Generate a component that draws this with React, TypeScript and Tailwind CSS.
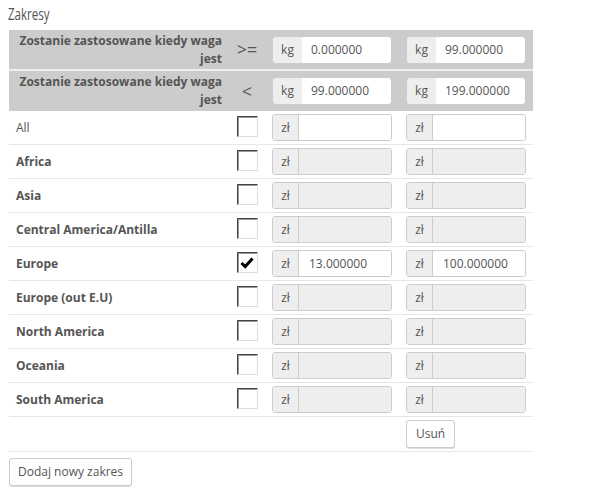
import React from "react";

const rows: { name: string; bold: boolean; enabled: boolean; checked: boolean; v1: string; v2: string }[] = [
  { name: "All", bold: false, enabled: true, checked: false, v1: "", v2: "" },
  { name: "Africa", bold: true, enabled: false, checked: false, v1: "", v2: "" },
  { name: "Asia", bold: true, enabled: false, checked: false, v1: "", v2: "" },
  { name: "Central America/Antilla", bold: true, enabled: false, checked: false, v1: "", v2: "" },
  { name: "Europe", bold: true, enabled: true, checked: true, v1: "13.000000", v2: "100.000000" },
  { name: "Europe (out E.U)", bold: true, enabled: false, checked: false, v1: "", v2: "" },
  { name: "North America", bold: true, enabled: false, checked: false, v1: "", v2: "" },
  { name: "Oceania", bold: true, enabled: false, checked: false, v1: "", v2: "" },
  { name: "South America", bold: true, enabled: false, checked: false, v1: "", v2: "" },
];

function InputGroup({ unit, value, enabled }: { unit: string; value: string; enabled: boolean }) {
  return (
    <div className="flex h-[27px] w-[120px] rounded-[3px] border border-[#ccc] overflow-hidden">
      <div className="w-[26px] flex items-center justify-center bg-[#eee] border-r border-[#ccc] text-[12px] text-[#555]">{unit}</div>
      <div className={`flex-1 flex items-center pl-[10px] text-[12px] text-[#555] ${enabled ? "bg-white" : "bg-[#eee]"}`}>{value}</div>
    </div>
  );
}

function HeaderInput({ value }: { value: string }) {
  return (
    <div className="flex h-[26px] w-[118px] rounded-[3px] overflow-hidden">
      <div className="w-[29px] flex items-center justify-center bg-[#eee] text-[12px] text-[#555]">kg</div>
      <div className="flex-1 flex items-center pl-[9px] text-[12px] text-[#555] bg-white">{value}</div>
    </div>
  );
}

function Checkbox({ checked }: { checked: boolean }) {
  return (
    <div className="w-[21px] h-[21px] bg-white border border-t-[#444] border-l-[#444] border-r-[#ddd] border-b-[#ddd] shadow-[inset_1px_1px_0_#999] flex items-center justify-center">
      {checked && (
        <svg width="14" height="12" viewBox="0 0 14 12">
          <path d="M1.5 6 L5.2 9.5 L12.5 1.5" fill="none" stroke="#000" strokeWidth="3" />
        </svg>
      )}
    </div>
  );
}

export default function App() {
  return (
    <div className="w-[590px] h-[492px] bg-white text-[#555]" style={{ fontFamily: '"Open Sans", sans-serif' }}>
      <div className="pl-[8px] pt-[2px] h-[30px] leading-[24px]">
        <span className="inline-block origin-left scale-x-[0.68] text-[17px] text-[#555]">Zakresy</span>
      </div>
      <div className="ml-[9px] w-[524px]">
        {[0, 1].map((i) => (
          <div key={i} className={`grid grid-cols-[220px_36px_134px_134px] items-center bg-[#ccc] ${i === 0 ? "h-[41px] border-b-2 border-[#eee]" : "h-[40px]"}`}>
            <div className="text-right pr-[7px] text-[12px] font-bold leading-[18px] text-[#555]">
              Zostanie zastosowane kiedy waga
              <br />
              jest
            </div>
            <div className="text-center text-[18px] text-[#555]">{i === 0 ? ">=" : "<"}</div>
            <div className="pl-[8px]"><HeaderInput value={i === 0 ? "0.000000" : "99.000000"} /></div>
            <div className="pl-[8px]"><HeaderInput value={i === 0 ? "99.000000" : "199.000000"} /></div>
          </div>
        ))}
        {rows.map((r) => (
          <div key={r.name} className="grid grid-cols-[220px_36px_134px_134px] items-center h-[34px] border-b border-[#e6e6e6]">
            <div className={`pl-[7px] text-[12px] text-[#555] ${r.bold ? "font-bold" : ""}`}>{r.name}</div>
            <div className="flex justify-center -mt-[2px]"><Checkbox checked={r.checked} /></div>
            <div className="pl-[7px]"><InputGroup unit="zł" value={r.v1} enabled={r.enabled} /></div>
            <div className="pl-[7px]"><InputGroup unit="zł" value={r.v2} enabled={r.enabled} /></div>
          </div>
        ))}
        <div className="grid grid-cols-[220px_36px_134px_134px] items-center h-[35px] border-b border-[#e6e6e6]">
          <div />
          <div />
          <div />
          <div className="pl-[7px]">
            <button className="h-[28px] px-[9px] rounded-[3px] border border-[#ccc] bg-white text-[12px] text-[#555] shadow-[0_1px_0_#ddd]">Usuń</button>
          </div>
        </div>
      </div>
      <div className="pl-[9px] pt-[6px]">
        <button className="h-[28px] px-[8px] rounded-[3px] border border-[#ccc] bg-white text-[12px] text-[#555] shadow-[0_1px_0_#ddd]">Dodaj nowy zakres</button>
      </div>
    </div>
  );
}
